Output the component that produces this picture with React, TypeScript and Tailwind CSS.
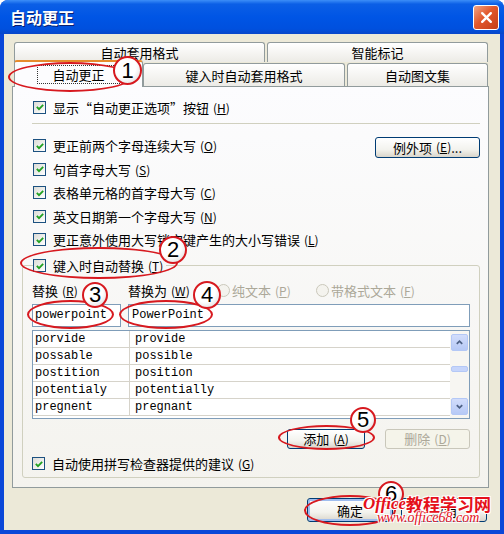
import React from 'react';

const rows = [
  ['porvide', 'provide'],
  ['possable', 'possible'],
  ['postition', 'position'],
  ['potentialy', 'potentially'],
  ['pregnent', 'pregnant'],
];

function Acc({ k }: { k: string }) {
  return (
    <span className="ml-[4px] text-[12px]">
      (<span className="underline">{k}</span>)
    </span>
  );
}

function Box() {
  return (
    <span className="flex h-[13px] w-[13px] shrink-0 items-center justify-center border border-[#1c5180] bg-[linear-gradient(135deg,#dcdcd7,#ffffff)]">
      <svg viewBox="0 0 11 11" className="h-[10px] w-[10px]">
        <path d="M2 5.3 L4.4 7.8 L9 3.2" fill="none" stroke="#21a121" strokeWidth="2" />
      </svg>
    </span>
  );
}

function Check({ text, k }: { text: string; k: string }) {
  return (
    <div className="flex items-center gap-[7px]">
      <Box />
      <span className="whitespace-nowrap">
        {text}
        <Acc k={k} />
      </span>
    </div>
  );
}

function Radio({ text, k, w }: { text: string; k: string; w?: string }) {
  return (
    <div className={`flex items-center gap-[2px] text-[#aca899] ${w ?? ''}`}>
      <span className="h-[13px] w-[13px] rounded-full border border-[#cac8bb] bg-[#f4f3ee]" />
      <span className="whitespace-nowrap">
        {text}
        <Acc k={k} />
      </span>
    </div>
  );
}

function Btn({ children, w, def, off }: { children: React.ReactNode; w: string; def?: boolean; off?: boolean }) {
  return (
    <div
      className={`flex items-center justify-center rounded-[3px] border ${w} ${
        off
          ? 'border-[#c9c7ba] bg-[#f5f4ea] text-[#aca899]'
          : 'border-[#003c74] bg-[linear-gradient(to_bottom,#ffffff,#f3f3ee_60%,#d9d5cb)]'
      } ${def ? 'shadow-[inset_0_0_0_2px_#9fbdef]' : ''}`}
    >
      {children}
    </div>
  );
}

function Tab({ label, w, active }: { label: string; w: string; active?: boolean }) {
  return (
    <div
      className={`flex items-center justify-center rounded-t-[3px] border border-b-0 border-[#919b9c] ${w} ${
        active
          ? 'relative z-10 -mb-px h-[27px] border-t-2 border-t-[#e68b2c] bg-[#fcfcfe]'
          : 'h-full bg-[linear-gradient(to_bottom,#ffffff,#ecebe6)]'
      }`}
    >
      {active ? <span className="border border-dotted border-[#333] px-[14px] py-[2px]">{label}</span> : label}
    </div>
  );
}

function ScrollBtn({ up }: { up?: boolean }) {
  return (
    <div className="flex h-[17px] w-[17px] items-center justify-center rounded-[2px] border border-[#b4c8f6] bg-[linear-gradient(to_bottom,#d2ddfb,#b6c9f6)]">
      <svg viewBox="0 0 10 10" className="h-[9px] w-[9px]">
        <path d={up ? 'M2 6.5 L5 3.5 L8 6.5' : 'M2 3.5 L5 6.5 L8 3.5'} fill="none" stroke="#4d6185" strokeWidth="2" />
      </svg>
    </div>
  );
}

const oval = 'absolute z-20 rounded-[50%] border-[2.5px] border-[#d7191f]';
const badge =
  "absolute z-30 flex items-center justify-center rounded-full border-2 border-[#d7191f] bg-[radial-gradient(circle_at_40%_35%,#ffffff_50%,#d2d2d2)] font-['Liberation_Sans',sans-serif] text-[22px] leading-none text-black";

export default function App() {
  return (
    <div className="relative h-[534px] w-[504px] overflow-hidden rounded-t-[8px] bg-[#0a47d8] font-['Noto_Sans_CJK_SC',sans-serif] text-[13px] leading-none text-black">
      {/* title bar */}
      <div className="flex h-[34px] items-center justify-between bg-[linear-gradient(to_bottom,#3c8ef8_0%,#0b5fe6_12%,#0055e5_50%,#0050de_85%,#0846c9_100%)] pl-[10px] pr-[5px]">
        <span className="text-[16px] font-bold text-white [text-shadow:1px_1px_0_#0a1f6e]">自动更正</span>
        <div className="flex h-[25px] w-[26px] items-center justify-center rounded-[3px] border border-white bg-[linear-gradient(135deg,#f2a585,#e2582c_45%,#c43e18)]">
          <svg viewBox="0 0 12 12" className="h-[13px] w-[13px]">
            <path d="M2 2 L10 10 M10 2 L2 10" stroke="#fff" strokeWidth="2.2" strokeLinecap="round" />
          </svg>
        </div>
      </div>

      {/* dialog body */}
      <div className="mx-[4px] flex h-[496px] flex-col bg-[#ece9d8] pl-[8px] pt-[8px]">
        <div className="ml-[2px] flex h-[20px] gap-[2px]">
          <Tab label="自动套用格式" w="w-[251px]" />
          <Tab label="智能标记" w="w-[221px]" />
        </div>
        <div className="ml-[2px] flex h-[24px] items-end">
          <Tab label="自动更正" w="w-[129px]" active />
          <div className="flex h-[23px] gap-[2px]">
            <Tab label="键入时自动套用格式" w="w-[202px]" />
            <Tab label="自动图文集" w="w-[141px]" />
          </div>
        </div>

        <div className="flex h-[402px] w-[477px] flex-col border border-[#919b9c] bg-[linear-gradient(to_bottom,#fcfcfe,#f4f3ee)]">
          <div className="ml-[20px] mt-[12px] flex h-[16px] items-center">
            <Check text="显示“自动更正选项”按钮" k="H" />
          </div>
          <div className="ml-[19px] mr-[8px] mt-[8px] h-px bg-[#d0d0bf]" />
          <div className="ml-[20px] mr-[8px] mt-[10px] flex flex-col">
            <div className="flex h-[23.5px] items-center justify-between">
              <Check text="更正前两个字母连续大写" k="O" />
              <Btn w="h-[21px] w-[105px] mt-[3px]">
                例外项<Acc k="E" />...
              </Btn>
            </div>
            <div className="flex h-[23.5px] items-center">
              <Check text="句首字母大写" k="S" />
            </div>
            <div className="flex h-[23.5px] items-center">
              <Check text="表格单元格的首字母大写" k="C" />
            </div>
            <div className="flex h-[23.5px] items-center">
              <Check text="英文日期第一个字母大写" k="N" />
            </div>
            <div className="flex h-[23.5px] items-center">
              <Check text="更正意外使用大写锁定键产生的大小写错误" k="L" />
            </div>
          </div>

          <fieldset className="ml-[9px] mr-[8px] mt-[6px] rounded-[3px] border border-[#d0d0bf] px-[9px] pb-[5px]">
            <legend className="ml-px pr-[3px]">
              <div className="flex h-[16px] items-center">
                <Check text="键入时自动替换" k="T" />
              </div>
            </legend>

            <div className="mt-[9px] flex h-[16px] items-center">
              <span className="w-[96px] whitespace-nowrap">
                替换<Acc k="R" />
              </span>
              <span className="w-[89px] whitespace-nowrap">
                替换为<Acc k="W" />
              </span>
              <Radio text="纯文本" k="P" w="w-[99px]" />
              <Radio text="带格式文本" k="F" />
            </div>

            <div className="mt-[5px] flex h-[23px] gap-[7px] font-['Liberation_Mono',monospace] text-[12px]">
              <div className="flex w-[89px] items-center border border-[#7f9db9] bg-white pl-[2px]">powerpoint</div>
              <div className="flex flex-1 items-center border border-[#7f9db9] bg-white pl-[3px]">PowerPoint</div>
            </div>

            <div className="mt-[3px] flex h-[89px] border border-[#7f9db9] bg-white font-['Liberation_Mono',monospace] text-[12px]">
              <div className="flex flex-1 flex-col">
                {rows.map(([a, b]) => (
                  <div key={a} className="flex h-[17px] border-b border-[#d6d3ca]">
                    <div className="flex w-[97px] items-center border-r border-[#d6d3ca] pl-[2px]">{a}</div>
                    <div className="flex flex-1 items-center pl-[5px]">{b}</div>
                  </div>
                ))}
              </div>
              <div className="flex w-[19px] flex-col items-center bg-[#f7f6f2] pb-[3px] pt-[3px]">
                <ScrollBtn up />
                <div className="mt-[15px] h-[6px] w-[17px] rounded-[2px] border border-[#b4c8f6] bg-[#c6d5fb]" />
                <div className="flex-1" />
                <ScrollBtn />
              </div>
            </div>

            <div className="mt-[10px] flex h-[20px] justify-end gap-[20px]">
              <Btn w="w-[78px]">
                添加<Acc k="A" />
              </Btn>
              <Btn w="w-[85px]" off>
                删除<Acc k="D" />
              </Btn>
            </div>

            <div className="mt-[7px] flex h-[16px] items-center">
              <Check text="自动使用拼写检查器提供的建议" k="G" />
            </div>
          </fieldset>
        </div>

        <div className="mt-[10px] flex h-[24px] w-[477px] justify-end gap-[8px] pr-[2px]">
          <Btn w="w-[86px]" def>
            确定
          </Btn>
          <Btn w="w-[86px]">取消</Btn>
        </div>
      </div>

      {/* annotations */}
      <div className={`${oval} left-[8px] top-[62px] h-[30px] w-[124px]`} />
      <div className={`${oval} left-[20px] top-[247px] h-[32px] w-[158px]`} />
      <div className={`${oval} left-[27px] top-[300px] h-[29px] w-[87px]`} />
      <div className={`${oval} left-[119px] top-[300px] h-[29px] w-[94px]`} />
      <div className={`${oval} left-[278px] top-[425px] h-[25px] w-[97px]`} />
      <div className={`${oval} left-[304px] top-[495px] h-[31px] w-[92px]`} />

      <div className={`${badge} left-[113px] top-[56px] h-[29px] w-[29px]`}>1</div>
      <div className={`${badge} left-[159px] top-[236px] h-[28px] w-[28px]`}>2</div>
      <div className={`${badge} left-[82px] top-[282px] h-[26px] w-[26px]`}>3</div>
      <div className={`${badge} left-[193px] top-[281px] h-[28px] w-[28px]`}>4</div>
      <div className={`${badge} left-[350px] top-[407px] h-[26px] w-[26px]`}>5</div>
      <div className={`${badge} left-[378px] top-[481px] h-[26px] w-[26px]`}>6</div>

      {/* watermark */}
      <div className="absolute left-[363px] top-[495px] z-40 text-[#e5101a] [text-shadow:-1px_-1px_0_#fff,1px_-1px_0_#fff,-1px_1px_0_#fff,1px_1px_0_#fff]">
        <div className="flex items-end">
          <span className="font-['Liberation_Serif',serif] text-[17px] font-bold italic">Office</span>
          <span className="text-[17px] font-bold">教程学习网</span>
        </div>
        <div className="ml-[14px] mt-[-1px] font-['Liberation_Serif',serif] text-[14px] italic">www.office68.com</div>
      </div>
    </div>
  );
}
